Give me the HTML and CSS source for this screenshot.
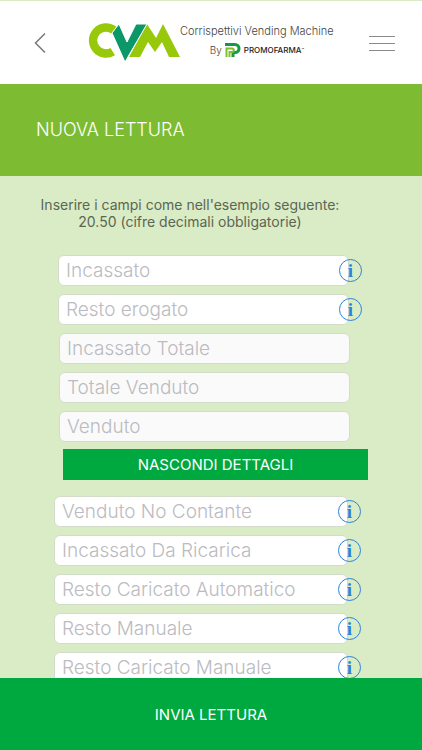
FILE: index.html
```
<!DOCTYPE html>
<html lang="it">
<head>
  <meta charset="UTF-8">
  <meta name="viewport" content="width=device-width, initial-scale=1">
  <title>Nuova Lettura</title>
  <link rel="stylesheet" href="styles.css">
</head>
<body>
  <header class="topbar">
    <button class="icon-btn" type="button" aria-label="Indietro">
      <svg width="12" height="22" viewBox="0 0 12 22"><path d="M11 1.5L1.5 11L11 20.5" fill="none" stroke="#777" stroke-width="1.5"/></svg>
    </button>
    <a href="#" class="logo">
      <svg class="logo-mark" width="92" height="40" viewBox="0 0 92 40">
        <path d="M28.5 3.8A17.2 17.2 0 1 0 27 32.2L22.5 24.9A8.7 8.7 0 1 1 23.3 10.6Z" fill="#97c80a"/>
        <path d="M41 34L59 1L68 15L75 1L92 34H81L74 19L67 29L60 19L52 34Z" fill="#97c80a"/>
        <path d="M24 10L31 1L39 19L48 1H59L37 39Z" fill="#0b9767" stroke="#fff"/>
      </svg>
      <span class="logo-text">
        <span class="logo-name">Corrispettivi Vending Machine</span>
        <span class="logo-by">By
          <svg width="16" height="14" viewBox="0 0 16 14">
            <path d="M0 1.5H10A4 4 0 0 1 10 9.5H8V14" fill="none" stroke="#169b45" stroke-width="3"/>
            <path d="M1.5 14V5.5H7A1.500 1.5 0 0 1 7 9H4.5V14" fill="none" stroke="#7fbf30" stroke-width="2"/>
          </svg>
          <b>PROMOFARMA<small>™</small></b>
        </span>
      </span>
    </a>
    <button class="icon-btn" type="button" aria-label="Menu">
      <svg width="28" height="16" viewBox="0 0 28 16"><path d="M1 1.5H27M1 8.5H27M1 15.5H27" stroke="#8a8a8a"/></svg>
    </button>
  </header>

  <h1 class="title">NUOVA LETTURA</h1>

  <form class="reading" id="reading">
    <p class="hint">Inserire i campi come nell'esempio seguente:<br>20.50 (cifre decimali obbligatorie)</p>

    <div class="fields">
      <div class="field">
        <input type="text" placeholder="Incassato" aria-label="Incassato">
        <button class="info" type="button" aria-label="Info Incassato">i</button>
      </div>
      <div class="field">
        <input type="text" placeholder="Resto erogato" aria-label="Resto erogato">
        <button class="info" type="button" aria-label="Info Resto erogato">i</button>
      </div>
      <div class="field total">
        <input type="text" placeholder="Incassato Totale" aria-label="Incassato Totale" disabled>
      </div>
      <div class="field total">
        <input type="text" placeholder="Totale Venduto" aria-label="Totale Venduto" disabled>
      </div>
      <div class="field total">
        <input type="text" placeholder="Venduto" aria-label="Venduto" disabled>
      </div>
    </div>

    <button class="toggle-btn" type="button">NASCONDI DETTAGLI</button>

    <div class="fields details">
      <div class="field">
        <input type="text" placeholder="Venduto No Contante" aria-label="Venduto No Contante">
        <button class="info" type="button" aria-label="Info Venduto No Contante">i</button>
      </div>
      <div class="field">
        <input type="text" placeholder="Incassato Da Ricarica" aria-label="Incassato Da Ricarica">
        <button class="info" type="button" aria-label="Info Incassato Da Ricarica">i</button>
      </div>
      <div class="field">
        <input type="text" placeholder="Resto Caricato Automatico" aria-label="Resto Caricato Automatico">
        <button class="info" type="button" aria-label="Info Resto Caricato Automatico">i</button>
      </div>
      <div class="field">
        <input type="text" placeholder="Resto Manuale" aria-label="Resto Manuale">
        <button class="info" type="button" aria-label="Info Resto Manuale">i</button>
      </div>
      <div class="field">
        <input type="text" placeholder="Resto Caricato Manuale" aria-label="Resto Caricato Manuale">
        <button class="info" type="button" aria-label="Info Resto Caricato Manuale">i</button>
      </div>
    </div>
  </form>

  <button class="submit-btn" type="submit" form="reading">INVIA LETTURA</button>
</body>
</html>
```
FILE: styles.css
```
* {
  box-sizing: border-box;
}
body {
  margin: 0;
  height: 100vh;
  display: flex;
  flex-direction: column;
  font-family: Inter, Roboto, sans-serif;
  background-color: #d9ecc5;
}
button {
  font-family: inherit;
  border: none;
  cursor: pointer;
}
.topbar {
  display: flex;
  align-items: center;
  flex-shrink: 0;
  height: 84px;
  padding: 0 25px 0 33px;
  background-color: #fff;
  border-top: 1px solid #d9ecc5;
}
.icon-btn {
  display: flex;
  padding: 1px;
  background: none;
}
.logo {
  display: flex;
  margin: 0 auto 0 41px;
  color: #444;
  text-decoration: none;
}
.logo-text {
  display: flex;
  flex-direction: column;
  align-items: center;
}
.logo-name {
  font-size: 11px;
  font-weight: 300;
  line-height: 16px;
}
.logo-by {
  display: flex;
  align-items: center;
  gap: 3px;
  font-size: 10px;
  font-weight: 300;
  line-height: 22px;
}
.logo-by b {
  color: #222;
  font-size: 8px;
  font-weight: 500;
}
.logo-by small {
  font-size: 4px;
  vertical-align: top;
}
.title {
  flex-shrink: 0;
  margin: 0;
  padding: 0 36px;
  color: #fff;
  background-color: #7dbc32;
  font-size: 18px;
  font-weight: 300;
  line-height: 92px;
}
.reading {
  flex: 1;
  min-height: 0;
  overflow: hidden;
}
.hint {
  margin: 20px 42px 25px 0;
  color: #5c6653;
  font-size: 14px;
  line-height: 17px;
  text-align: center;
}
.fields {
  display: flex;
  flex-direction: column;
  gap: 8px;
  margin: 0 73px 0 58px;
}
.details {
  margin: 0 74px 0 54px;
}
.field {
  position: relative;
}
.total {
  margin: 0 -1px 0 1px;
}
.field input {
  display: block;
  width: 100%;
  height: 31px;
  padding: 0 7px;
  border: 1px solid #d3dcca;
  border-radius: 6px;
  background-color: #fff;
  font-family: inherit;
  font-size: 19px;
  font-weight: 300;
}
.field input:disabled {
  background-color: #fafafa;
}
.field input::placeholder {
  color: #bbbbc1;
}
.info {
  position: absolute;
  top: 4px;
  right: -13px;
  width: 23px;
  height: 23px;
  padding: 0;
  border: 1px solid #2c83dc;
  border-radius: 50%;
  background: none;
  color: #2c83dc;
  font-family: "Liberation Serif", serif;
  font-size: 19px;
  font-weight: bold;
  line-height: 20px;
}
.toggle-btn {
  display: block;
  width: calc(100% - 117px);
  height: 31px;
  margin: 7px 54px 16px 63px;
  color: #fff;
  background-color: #00a840;
  font-size: 15px;
}
.submit-btn {
  flex-shrink: 0;
  height: 72px;
  color: #fff;
  background-color: #00a840;
  font-size: 15px;
}
```
